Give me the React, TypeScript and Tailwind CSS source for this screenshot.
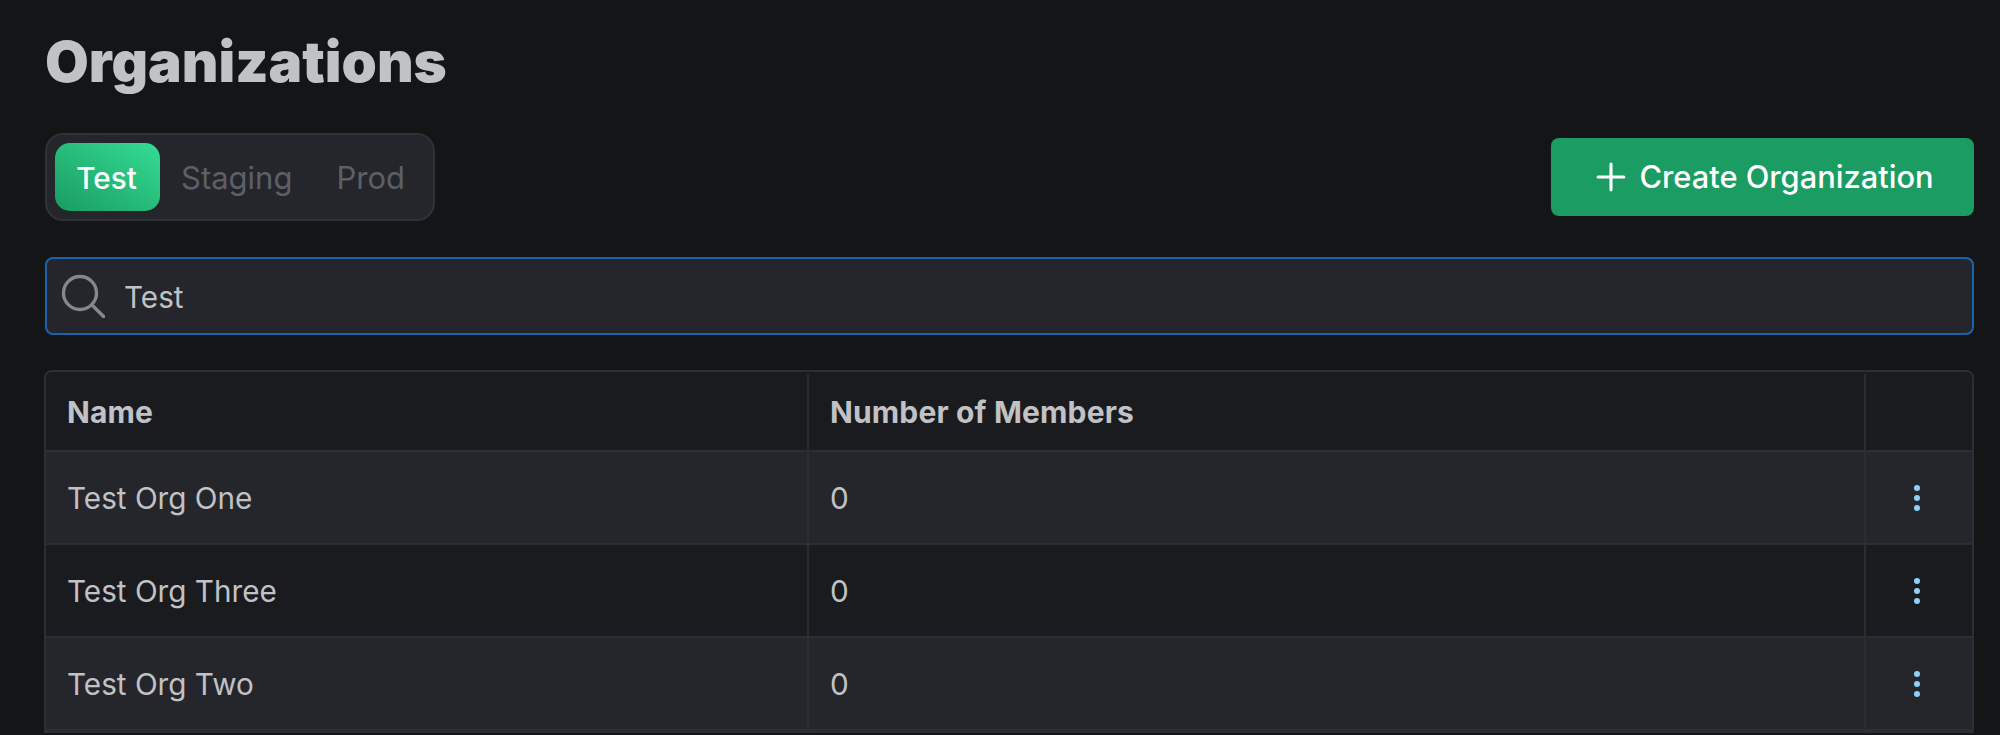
import React from "react";
import { Plus } from "lucide-react";

const orgs = ["Test Org One", "Test Org Three", "Test Org Two"];

function Dots() {
    return (
        <svg width="8" height="28" viewBox="0 0 8 28" fill="#8fd0fb">
            <circle cx="4" cy="4" r="3" />
            <circle cx="4" cy="14" r="3" />
            <circle cx="4" cy="24" r="3" />
        </svg>
    );
}

function SearchIcon() {
    return (
        <svg width="44" height="44" viewBox="0 0 44 44" fill="none" stroke="#85878c" strokeWidth="3.4" strokeLinecap="round">
            <circle cx="19" cy="19" r="16.5" />
            <path d="M31 31L43 43" />
        </svg>
    );
}

export default function App() {
    return (
        <div className="h-[735px] overflow-hidden bg-[#141517] pr-[26px] pl-[45px] pt-[28px] font-['Inter',sans-serif] text-[29.7px] text-[#c1c2c5]">
            <h1 className="text-[56.5px] leading-[68px] font-black">Organizations</h1>

            <div className="mt-[37px] flex h-[88px] items-start justify-between">
                <div className="flex h-[88px] w-[390px] items-center rounded-[18px] border-2 border-[#303136] bg-[#25262b] px-[8px]">
                    <div className="flex h-[68px] w-[105px] items-center justify-center rounded-[15px] bg-gradient-to-tr from-[#1a9c62] to-[#34dd94] pt-[2px] pr-[2px] font-medium text-white">
                        Test
                    </div>
                    <div className="ml-[21px] pt-[2px] text-[31px] text-[#5c5f66]">Staging</div>
                    <div className="ml-[44px] pt-[2px] text-[31px] text-[#5c5f66]">Prod</div>
                </div>
                <button className="mt-[5px] flex h-[78px] w-[423px] items-center justify-center gap-[6px] rounded-[8px] bg-[#1a9c62] pr-[2px] text-[30.8px] font-medium text-white">
                    <Plus size={44} strokeWidth={1.7} />
                    Create Organization
                </button>
            </div>

            <div className="mt-[36px] flex h-[78px] items-center gap-[19px] rounded-[8px] border-2 border-[#1864ab] bg-[#25262b] pl-[14px]">
                <SearchIcon />
                <span className="pt-[2px]">Test</span>
            </div>

            <div className="mt-[35px] -ml-[1px] overflow-hidden rounded-t-[8px] border-2 border-[#2c2e33]">
                <div className="grid h-[80px] grid-cols-[761px_1057px_1fr] border-b-2 border-[#2c2e33] bg-[#1a1b1e] pt-[2px] text-[30px] font-bold tracking-[0.15px]">
                    <div className="flex items-center pl-[21px]">Name</div>
                    <div className="flex items-center border-l-2 border-[#2a2c30] pl-[21px]">Number of Members</div>
                    <div className="border-l-2 border-[#2a2c30]" />
                </div>
                {orgs.map((name, i) => (
                    <div
                        key={name}
                        className={`grid h-[93px] grid-cols-[761px_1057px_1fr] border-b-2 border-[#2c2e33] ${i % 2 === 0 ? "bg-[#25262b]" : "bg-[#1a1b1e]"}`}
                    >
                        <div className="flex items-center pt-[2px] pl-[21px]">{name}</div>
                        <div className="flex items-center border-l-2 border-[#2a2c30] pt-[2px] pl-[21px]">0</div>
                        <div className="flex items-center justify-center border-l-2 border-[#2a2c30] pr-[4px]">
                            <Dots />
                        </div>
                    </div>
                ))}
            </div>
        </div>
    );
}
